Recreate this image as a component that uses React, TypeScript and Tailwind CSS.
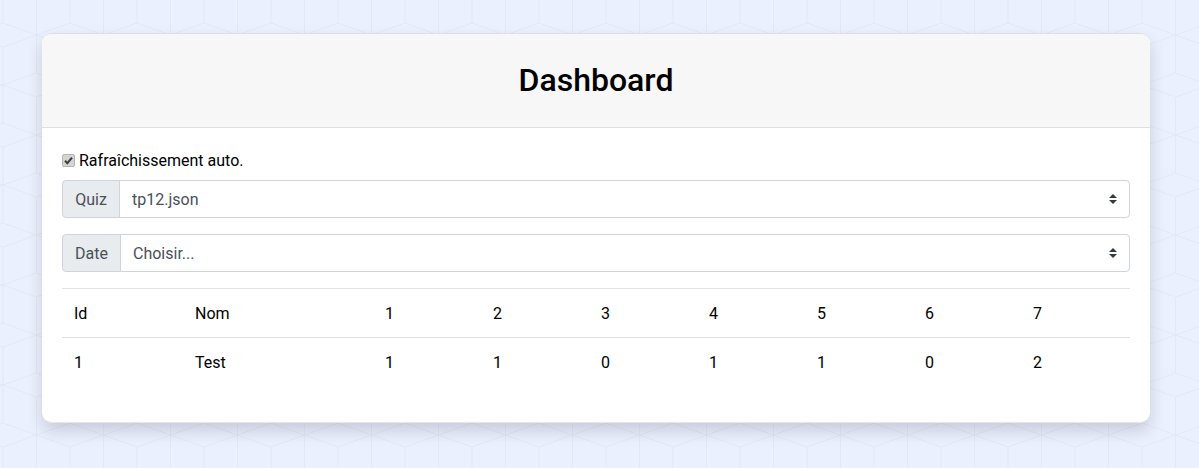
import React from "react";

const rows = [
  ["Id", "Nom", "1", "2", "3", "4", "5", "6", "7"],
  ["1", "Test", "1", "1", "0", "1", "1", "0", "2"],
];
const widths = [121, 190, 108, 108, 108, 108, 108, 108, 109];

function HexBackground() {
  return (
    <svg className="absolute inset-0 h-full w-full" aria-hidden="true">
      <defs>
        <pattern id="hex" width="67" height="100" patternUnits="userSpaceOnUse" patternTransform="translate(3 0)">
          <path
            d="M0 0V23M0 47V100M67 0V23M67 47V100M33.5 0V73M33.5 97V100M0 23L33.5 35L67 23M0 47L33.5 35L67 47M0 85L33.5 73L67 85M0 85L33.5 97L67 85"
            fill="none"
            stroke="#e4e7f6"
            strokeWidth="1"
          />
        </pattern>
      </defs>
      <rect width="100%" height="100%" fill="url(#hex)" />
    </svg>
  );
}

function SelectGroup({ label, value, addonWidth }: { label: string; value: string; addonWidth: string }) {
  return (
    <div className="flex h-[38px] w-full">
      <span className={`flex items-center justify-center rounded-l border border-[#ced4da] bg-[#e9ecef] pt-[2px] text-[#495057] ${addonWidth}`}>
        {label}
      </span>
      <div className="relative -ml-px flex-1">
        <select
          defaultValue={value}
          className="h-full w-full appearance-none rounded-r border border-[#ced4da] bg-white pl-3 pr-7 pt-[2px] text-[#495057] outline-none"
        >
          <option>{value}</option>
        </select>
        <svg
          className="pointer-events-none absolute right-[13px] top-[14px] h-[10px] w-[8px]"
          viewBox="0 0 4 5"
          aria-hidden="true"
        >
          <path fill="#343a40" d="M2 0L0 2h4zm0 5L0 3h4z" />
        </svg>
      </div>
    </div>
  );
}

export default function App() {
  return (
    <div className="relative h-[468px] overflow-hidden bg-[#ebf0ff] px-[42px] pt-[33px] font-['Roboto',sans-serif] text-base leading-6 text-black">
      <HexBackground />
      <div className="relative h-[390px] w-[1108px] rounded-[10px] border-y border-t-[#dedede] border-b-[#e6e6e6] bg-white shadow-[0_8px_16px_rgba(0,0,0,0.15)]">
        <div className="flex h-[94px] items-center justify-center rounded-t-[9px] border-b border-[#dfdfdf] bg-[#f7f7f7] pb-[2px]">
          <h1 className="text-[32px] font-medium leading-[38px]">Dashboard</h1>
        </div>
        <div className="px-5 pt-5">
          <label className="mb-2 flex h-6 items-center">
            <span className="relative mr-1 flex h-[13px] w-[13px]">
              <input
                type="checkbox"
                checked
                readOnly
                className="m-0 h-[13px] w-[13px] appearance-none rounded-[2px] border border-[#b4b4b4] bg-[#d4d4d4]"
              />
              <svg className="pointer-events-none absolute inset-0 h-[13px] w-[13px]" viewBox="0 0 13 13" aria-hidden="true">
                <path d="M3 6.8L5.3 9.2L10 3.6" fill="none" stroke="#3c3c3c" strokeWidth="2" />
              </svg>
            </span>
            <span className="pt-[2px]">Rafraîchissement auto.</span>
          </label>
          <div className="mb-4">
            <SelectGroup label="Quiz" value="tp12.json" addonWidth="w-[58px]" />
          </div>
          <div className="mb-4">
            <SelectGroup label="Date" value="Choisir..." addonWidth="w-[59px]" />
          </div>
          <table className="w-[1068px] table-fixed border-collapse">
            <colgroup>
              {widths.map((w, i) => (
                <col key={i} style={{ width: w }} />
              ))}
            </colgroup>
            <tbody>
              {rows.map((row, r) => (
                <tr key={r} className="h-[49px] border-t border-[#dee2e6]">
                  {row.map((cell, c) => (
                    <td key={c} className="px-3 pb-[11px] pt-[13px] align-top font-normal">
                      {cell}
                    </td>
                  ))}
                </tr>
              ))}
            </tbody>
          </table>
        </div>
      </div>
    </div>
  );
}
